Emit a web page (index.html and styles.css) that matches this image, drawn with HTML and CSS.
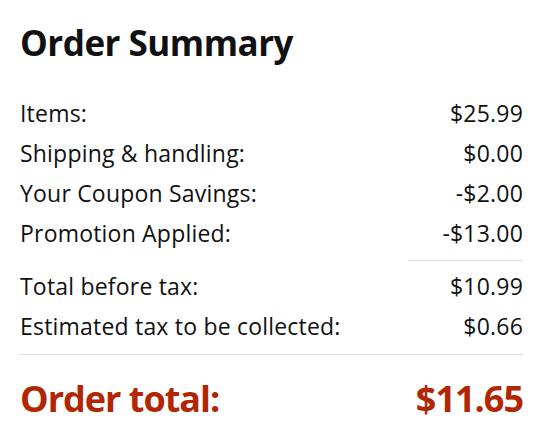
FILE: index.html
```html
<!DOCTYPE html>
<html>
<head>
<meta charset="utf-8">
<link rel="stylesheet" href="styles.css">
</head>
<body>
<div class="summary">
  <h1 class="title">Order Summary</h1>
  <div class="group">
    <div class="row"><span>Items:</span><span>$25.99</span></div>
    <div class="row"><span>Shipping &amp; handling:</span><span>$0.00</span></div>
    <div class="row"><span>Your Coupon Savings:</span><span>-$2.00</span></div>
    <div class="row"><span>Promotion Applied:</span><span>-$13.00</span></div>
  </div>
  <div class="rule-short"></div>
  <div class="group second">
    <div class="row"><span>Total before tax:</span><span>$10.99</span></div>
    <div class="row"><span>Estimated tax to be collected:</span><span>$0.66</span></div>
  </div>
  <div class="rule-full"></div>
  <div class="row total"><span>Order total:</span><span>$11.65</span></div>
</div>
</body>
</html>
```
FILE: styles.css
```css
html, body {
  margin: 0;
  padding: 0;
  background: #ffffff;
}
.summary {
  font-family: "Open Sans", "Noto Sans", sans-serif;
  color: #111111;
  padding: 23px 31px 0 20px;
}
.title {
  margin: 0;
  font-size: 35px;
  line-height: 40px;
  font-weight: 700;
  letter-spacing: -0.5px;
}
.group {
  margin-top: 30px;
}
.group.second {
  margin-top: 5px;
}
.row {
  display: flex;
  justify-content: space-between;
  font-size: 23px;
  line-height: 40px;
  letter-spacing: 0.2px;
}
.rule-short {
  margin: 7px 0 0 auto;
  width: 115px;
  height: 1px;
  background: #dddddd;
}
.rule-full {
  margin-top: 8px;
  height: 1px;
  background: #dddddd;
}
.row.total {
  margin-top: 20px;
  font-size: 36px;
  line-height: 48px;
  font-weight: 700;
  letter-spacing: -1px;
  color: #b12704;
}
```
